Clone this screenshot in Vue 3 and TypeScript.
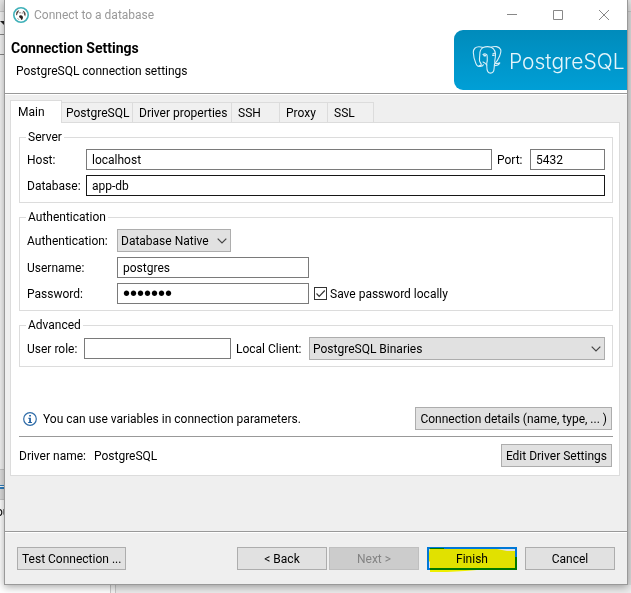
<script setup lang="ts">
import { ref } from 'vue'

const tabs: string[] = ['Main', 'PostgreSQL', 'Driver properties', 'SSH', 'Proxy', 'SSL']
const activeTab = ref<string>('Main')

const host = ref('localhost')
const port = ref('5432')
const database = ref('app-db')
const authentication = ref('Database Native')
const username = ref('postgres')
const password = ref('secret1')
const savePassword = ref(true)
const userRole = ref('')
const localClient = ref('PostgreSQL Binaries')
</script>

<template>
  <div class="desktop">
    <div class="backdrop" aria-hidden="true">
      <div class="back-toolbar"></div>
      <div class="back-arrow"></div>
      <div class="back-row"></div>
      <div class="back-tab"></div>
      <div class="back-page"><span>ou</span></div>
      <div class="back-side"></div>
      <div class="back-edge"></div>
    </div>

    <form class="dialog" @submit.prevent>
      <div class="titlebar">
        <svg class="app-icon" viewBox="0 0 16 16" width="16" height="16" aria-hidden="true">
          <circle cx="8" cy="8" r="7.2" fill="#fff" stroke="#3fb0b8" stroke-width="1.6" />
          <path d="M3.2 5.8C3.6 4 5 3.2 6.2 3.2L5.4 5.2 4.4 6.8 4 8.6 3 7.800Z" fill="#5a4a44" />
          <path d="M9.6 3.8C11 3.6 12.4 5 12.7 7L12.2 9.4 11.1 7.800 10.6 5.600Z" fill="#5a4a44" />
          <path d="M6 9 7.200 8.200 9 8.400 10 10 9.600 12.200 8.200 13 7.600 11.200 6.400 10.600Z" fill="#2b2422" />
          <path d="M6.400 5.800h1.200M8.800 6h.9" stroke="#2b2422" stroke-width=".9" />
          <path d="M4.600 11.200 6 12.800" stroke="#a49a92" stroke-width="1" />
        </svg>
        <span class="caption">Connect to a database</span>
        <button type="button" class="win-button" aria-label="Minimize">
          <svg viewBox="0 0 10 10" width="10" height="10"><path d="M0 4.500H10" /></svg>
        </button>
        <button type="button" class="win-button" aria-label="Maximize">
          <svg viewBox="0 0 10 10" width="10" height="10"><path d="M.5 .5H9.500V9.500H.5Z" /></svg>
        </button>
        <button type="button" class="win-button" aria-label="Close">
          <svg viewBox="0 0 10 10" width="10" height="10"><path d="M0 0 10 10M10 0 0 10" /></svg>
        </button>
      </div>

      <header class="banner">
        <div class="heading">
          <h1>Connection Settings</h1>
          <p>PostgreSQL connection settings</p>
        </div>
        <div class="brand">
          <svg viewBox="0 0 30 30" width="30" height="30" fill="none" stroke="#d8eff8" stroke-width="1.1" stroke-linejoin="round" stroke-linecap="round" aria-hidden="true">
            <path d="M8 20.5C6.300 22 5 21.200 3.900 18.500 2.700 15.500 1.400 11 1.300 7.600 1.200 3.700 3.600 1.800 7 1.800 8.500 1.800 9.800 2.200 11 2.600" />
            <path d="M11 2.600C8.300 4.200 7.700 6.500 7.800 9.400 7.800 12.500 6.400 15.800 8.600 18 9.800 19.200 9.200 20.700 8 20.500M6.600 21.200C9 21.600 10.800 21 11.400 19.800" />
            <path d="M11 2.600C13.500 1.500 17 1.500 19.200 2.300 22.600 4 24 8 23.300 12.300 22.800 14.700 22.500 16.800 22.900 18.300" />
            <path d="M19.200 2.300C22.500 .8 27 1.200 28.600 4.500 29.800 7.400 26.500 15.200 23 18.300 24.700 18.700 26.500 18.300 27.800 17.900 26.800 20 24.600 20.600 22.500 20.600" />
            <path d="M11 9.500C12.700 8.300 15 8.900 15.100 10.500 15.200 13 15.700 15.500 14.900 17.500 14.500 19 14.800 20 14.800 21.500 14.800 25 15.600 28.100 18.500 28.100 21.200 28.100 22 26 22.100 23.500L22.500 18.700" />
            <path d="M11 17C12.500 17.500 13.500 18.500 14.800 20M21 8.600C22 7.900 23 8.200 23.400 9" />
            <path d="M12 10.600h1.500M20.800 10.200h1.200" stroke-width="1.600" />
          </svg>
          <span>PostgreSQL</span>
        </div>
      </header>

      <main class="body">
        <div class="tabs" role="tablist">
          <button
            v-for="tab in tabs"
            :key="tab"
            type="button"
            role="tab"
            class="tab"
            :class="{ active: tab === activeTab }"
            :aria-selected="tab === activeTab"
            @click="activeTab = tab"
          >{{ tab }}</button>
        </div>

        <section class="panel" role="tabpanel">
          <fieldset class="server">
            <legend>Server</legend>
            <div class="row">
              <label for="host">Host:</label>
              <input id="host" v-model="host" type="text" class="grow" />
              <label for="port" class="inline-label port-label">Port:</label>
              <input id="port" v-model="port" type="text" class="port" />
            </div>
            <div class="row">
              <label for="database">Database:</label>
              <input id="database" v-model="database" type="text" class="grow hot" />
            </div>
          </fieldset>

          <fieldset class="auth">
            <legend>Authentication</legend>
            <div class="row">
              <label for="authentication">Authentication:</label>
              <span class="combo">
                <select id="authentication" v-model="authentication">
                  <option>Database Native</option>
                </select>
                <svg viewBox="0 0 10 6" width="10" height="6" aria-hidden="true"><path d="M.7 .7 5 5 9.300 .7" /></svg>
              </span>
            </div>
            <div class="row">
              <label for="username">Username:</label>
              <input id="username" v-model="username" type="text" class="credential" />
            </div>
            <div class="row">
              <label for="password">Password:</label>
              <input id="password" v-model="password" type="password" class="credential" />
              <label class="check">
                <input v-model="savePassword" type="checkbox" />
                <svg viewBox="0 0 13 13" width="13" height="13" aria-hidden="true"><path v-if="savePassword" d="M2.500 6.500 5.200 9.300 10.800 3.500" /></svg>
                <span>Save password locally</span>
              </label>
            </div>
          </fieldset>

          <fieldset class="advanced">
            <legend>Advanced</legend>
            <div class="row">
              <label for="role">User role:</label>
              <input id="role" v-model="userRole" type="text" class="role" />
              <label for="client" class="inline-label client-label">Local Client:</label>
              <span class="combo grow">
                <select id="client" v-model="localClient">
                  <option>PostgreSQL Binaries</option>
                </select>
                <svg viewBox="0 0 10 6" width="10" height="6" aria-hidden="true"><path d="M.7 .7 5 5 9.300 .7" /></svg>
              </span>
            </div>
          </fieldset>

          <div class="hint">
            <svg viewBox="0 0 14 14" width="14" height="14" aria-hidden="true">
              <circle cx="7" cy="7" r="6.300" fill="#fff" stroke="#2f6ca8" stroke-width="1.200" />
              <path d="M6.200 3h1.700v1.600H6.200ZM5.300 5.700h2.600v4.300h1v1H5.200v-1h1V6.700h-.9Z" fill="#1c5c9e" />
            </svg>
            <span>You can use variables in connection parameters.</span>
            <button type="button" class="push">Connection details (name, type, ... )</button>
          </div>

          <div class="driver">
            <span>Driver name:</span>
            <span>PostgreSQL</span>
            <button type="button" class="push">Edit Driver Settings</button>
          </div>
        </section>
      </main>

      <footer class="actions">
        <button type="button" class="push test">Test Connection ...</button>
        <div class="pair">
          <button type="button" class="push wide">&lt; Back</button>
          <button type="button" class="push wide" disabled>Next &gt;</button>
        </div>
        <div class="finish">
          <button type="submit" class="push wide primary">Finish</button>
          <svg class="marker" viewBox="0 0 90 26" width="90" height="26" aria-hidden="true">
            <path d="M3 1H17V2H70L80 4H88V10H90V23H50L38 24 20 25H3V15L2 14V6Z" fill="#ffff00" />
          </svg>
        </div>
        <button type="button" class="push wide">Cancel</button>
      </footer>
    </form>
  </div>
</template>

<style>
body {
  margin: 0;
  background: #f0f0f0;
}
</style>

<style scoped>
.desktop {
  position: relative;
  box-sizing: border-box;
  min-height: 100vh;
  padding: 0 3px 8px 4px;
  overflow: hidden;
  display: flex;
  font: 12px/16px Roboto, "Open Sans", sans-serif;
  color: #000;
}

.desktop *,
.desktop *::before {
  box-sizing: border-box;
}

/* Application window that shows around the dialog */
.backdrop {
  position: absolute;
  inset: 0;
  overflow: hidden;
  background: #f4f4f4;
}

.back-toolbar {
  position: absolute;
  top: 0;
  left: 0;
  right: 0;
  height: 12px;
  background: #e4e4e4;
  border-bottom: 1px solid #c8c8c8;
}

.back-arrow {
  position: absolute;
  top: 21px;
  left: 0;
  border: solid transparent;
  border-width: 4px 4px 0;
  border-top-color: #222;
}

.back-row {
  position: absolute;
  top: 34px;
  left: 0;
  width: 10px;
  height: 21px;
  border: solid #888;
  border-width: 1px 0;
}

.back-tab {
  position: absolute;
  top: 469px;
  left: 0;
  width: 10px;
  height: 31px;
  border: solid #c8c8c8;
  border-width: 1px 0;
  background: linear-gradient(#e0e0e0 15px, #2f7fc0 15px 16px, #fff 16px 17px, #2f7fc0 17px 19px, #dcdcdc 19px);
}

.back-page {
  position: absolute;
  top: 500px;
  left: 0;
  bottom: 0;
  width: 111px;
  padding-top: 4px;
  background: #fff;
  border-right: 1px solid #c8c8c8;
}

.back-page span {
  margin-left: -4px;
}

.back-side {
  position: absolute;
  left: 115px;
  right: 0;
  top: 500px;
  bottom: 0;
  background: #ececec;
  border-left: 1px solid #c8c8c8;
}

.back-edge {
  position: absolute;
  top: 12px;
  right: 0;
  bottom: 8px;
  width: 10px;
  background: #dedede;
}

.dialog {
  position: relative;
  flex: 1;
  min-width: 0;
  display: flex;
  flex-direction: column;
  background: #efefef;
  border: solid #999;
  border-width: 0 1px 1px;
  box-shadow: 0 2px 8px rgba(0, 0, 0, 0.35);
}

.titlebar {
  display: flex;
  align-items: center;
  height: 30px;
  padding-left: 8px;
  background: #fff;
  color: #999;
}

.caption {
  flex: 1;
  padding-left: 5px;
}

.app-icon,
.win-button svg,
.brand svg,
.hint svg {
  display: block;
  flex: none;
}

.win-button {
  width: 46px;
  height: 28px;
  padding: 0 18px;
  border: 0;
  background: none;
}

.win-button svg {
  fill: none;
  stroke: #888;
}

.banner {
  display: flex;
  justify-content: space-between;
  height: 65px;
  background: #fff;
  border-bottom: 1px solid #fff;
  box-shadow: inset 0 -1px #999;
}

.heading {
  padding: 9px 0 0 6px;
}

h1 {
  margin: 0;
  font-size: 14px;
  line-height: 18px;
}

.heading p {
  margin: 6px 0 0 5px;
}

.brand {
  display: flex;
  align-items: center;
  gap: 7px;
  width: 173px;
  height: 60px;
  padding-left: 18px;
  overflow: hidden;
  border-radius: 9px 0 0 9px;
  background: linear-gradient(#008bbb, #009fd6);
  color: #e4f5fb;
  font-family: Inter, "Liberation Sans", sans-serif;
  font-size: 21px;
  line-height: 24px;
  font-weight: 300;
}

.brand span {
  padding-top: 4px;
}

.body {
  flex: 1;
  padding: 5px 7px 55px 5px;
}

.tabs {
  display: flex;
  align-items: flex-end;
}

.tab {
  height: 20px;
  margin: 0;
  padding: 0 6px;
  border: solid #dcdcdc;
  border-width: 1px 1px 0 0;
  background: #f0f0f0;
  color: inherit;
  font: inherit;
  text-align: left;
  white-space: nowrap;
}

.tab:nth-child(2) {
  width: 71px;
  padding: 0 4px;
}

.tab:nth-child(3) {
  width: 99px;
}

.tab:nth-child(4),
.tab:nth-child(5) {
  width: 48px;
}

.tab:nth-child(6) {
  width: 46px;
}

.tab.active {
  position: relative;
  width: 52px;
  height: 23px;
  margin-bottom: -1px;
  padding: 0 7px 1px;
  border-left-width: 1px;
  background: #fff;
}

.panel {
  padding: 5px 6px 8px 8px;
  border: 1px solid #dcdcdc;
  background: #fff;
}

fieldset {
  display: flex;
  flex-direction: column;
  gap: 5px;
  min-width: 0;
  margin: 0 0 5px;
  padding: 3px 7px 6px;
  border: 1px solid #dcdcdc;
}

legend {
  height: 18px;
  margin-left: -1px;
  padding: 0 2px;
  line-height: 18px;
}

.row {
  display: flex;
  align-items: center;
}

.row > label {
  flex: none;
  white-space: nowrap;
}

.server .row > label:first-child {
  width: 59px;
}

.auth .row > label:first-child {
  width: 90px;
}

.advanced .row > label:first-child {
  width: 57px;
}

.row .inline-label {
  padding-left: 5px;
}

.port-label {
  width: 38px;
}

.client-label {
  width: 78px;
}

.row > input {
  height: 21px;
  min-width: 0;
  margin: 0;
  padding: 0 5px;
  border: 1px solid #7a7a7a;
  border-radius: 0;
  background: #fff;
  color: inherit;
  font: inherit;
  outline: none;
}

.row > input[type="password"] {
  font-family: "Liberation Sans", sans-serif;
  font-size: 20px;
}

.row > input.hot {
  border-color: #171717;
}

.row .grow {
  flex: 1;
}

.row .port {
  width: 75px;
}

.row .credential {
  width: 192px;
}

.row .role {
  width: 147px;
}

.combo {
  display: grid;
  align-items: center;
  height: 23px;
}

.combo select,
.combo svg {
  grid-area: 1 / 1;
}

.combo select {
  width: 100%;
  height: 23px;
  margin: 0;
  padding: 0 20px 0 3px;
  appearance: none;
  border: 1px solid #adadad;
  border-radius: 0;
  background: #e1e1e1;
  color: inherit;
  font: inherit;
}

.auth .combo {
  width: 114px;
}

.combo svg {
  justify-self: end;
  margin-right: 4px;
  fill: none;
  stroke: #444;
  stroke-width: 1.2px;
  pointer-events: none;
}

.check {
  display: grid;
  grid-template-columns: 13px auto;
  column-gap: 3px;
  align-items: center;
  padding-left: 5px;
}

.check input,
.check svg {
  grid-area: 1 / 1;
}

.check input {
  width: 13px;
  height: 13px;
  margin: 0;
  appearance: none;
  border: 1px solid #333;
  background: #fff;
}

.check svg {
  fill: none;
  stroke: #333;
  stroke-width: 1.2px;
  pointer-events: none;
}

.hint {
  display: flex;
  align-items: center;
  margin-top: 40px;
  padding: 0 1px 6px 4px;
  border-bottom: 1px solid #999;
}

.hint span {
  flex: 1;
  padding-left: 6px;
}

.driver {
  display: flex;
  align-items: center;
  gap: 8px;
  padding: 7px 1px 0 0;
}

.driver .push {
  margin-left: auto;
}

.push {
  height: 23px;
  margin: 0;
  padding: 0 4px;
  border: 1px solid #adadad;
  background: #e1e1e1;
  color: inherit;
  font: inherit;
  white-space: nowrap;
}

.push:disabled {
  border-color: #bfbfbf;
  background: #ccc;
  color: #838383;
}

.push.wide {
  width: 90px;
}

.push.primary {
  display: block;
  border: 2px solid #0078d7;
}

.actions {
  display: flex;
  gap: 8px;
  padding: 15px 12px 14px;
  border-top: 1px solid #999;
  box-shadow: inset 0 1px #fff;
}

.actions .test {
  margin-right: auto;
}

.pair {
  display: flex;
  gap: 2px;
}

.finish {
  position: relative;
}

.marker {
  position: absolute;
  top: 0;
  left: 0;
  mix-blend-mode: multiply;
  pointer-events: none;
}
</style>
